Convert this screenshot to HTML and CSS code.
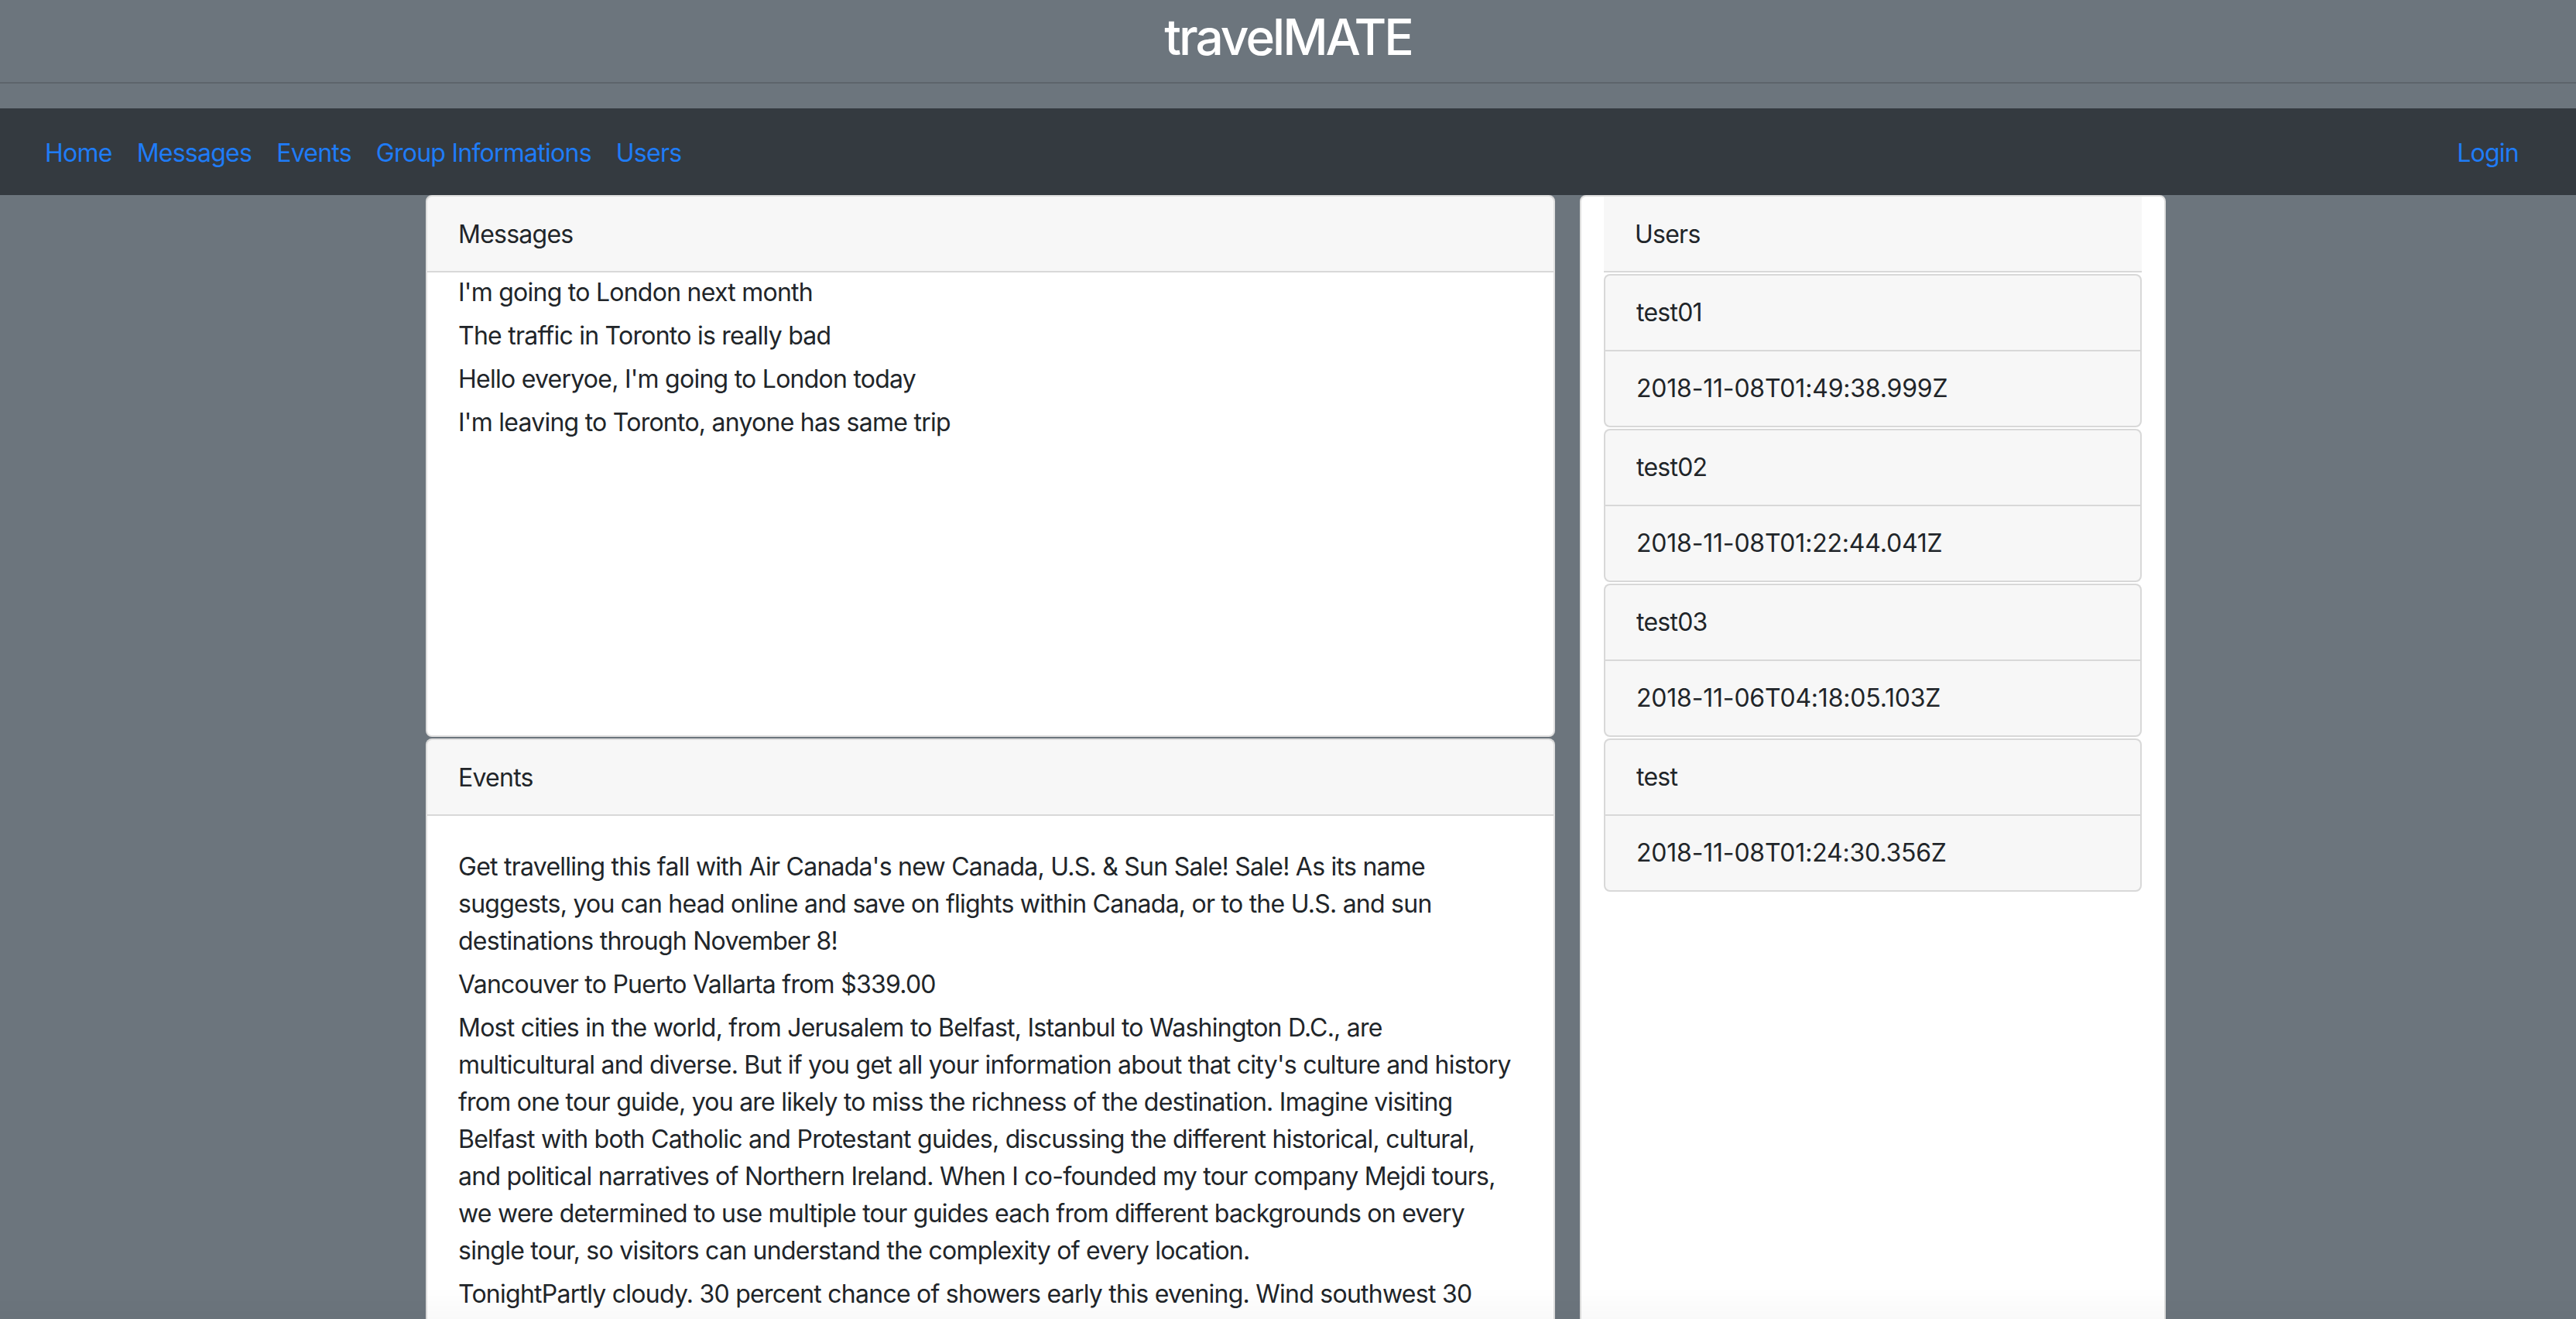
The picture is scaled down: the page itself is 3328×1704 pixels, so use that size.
FILE: index.html
```html
<!DOCTYPE html>
<html lang="en">
<head>
<meta charset="utf-8">
<title>travelMATE</title>
<link rel="stylesheet" href="styles.css">
</head>
<body>
<header class="site-header">
  <h2 class="site-title">travelMATE</h2>
</header>
<nav class="navbar">
  <div class="nav-left">
    <a class="nav-link" href="#">Home</a>
    <a class="nav-link" href="#">Messages</a>
    <a class="nav-link" href="#">Events</a>
    <a class="nav-link" href="#">Group Informations</a>
    <a class="nav-link" href="#">Users</a>
  </div>
  <div class="nav-right">
    <a class="nav-link" href="#">Login</a>
  </div>
</nav>
<main class="layout">
  <section class="left-col">
    <div class="card">
      <div class="card-header">Messages</div>
      <div class="messages-body">
        <p class="msg">I'm going to London next month</p>
        <p class="msg">The traffic in Toronto is really bad</p>
        <p class="msg">Hello everyoe, I'm going to London today</p>
        <p class="msg">I'm leaving to Toronto, anyone has same trip</p>
      </div>
    </div>
    <div class="card events-card">
      <div class="card-header">Events</div>
      <div class="events-body">
        <p>Get travelling this fall with Air Canada's new Canada, U.S. &amp; Sun Sale! Sale! As its name suggests, you can head online and save on flights within Canada, or to the U.S. and sun destinations through November 8!</p>
        <p>Vancouver to Puerto Vallarta from $339.00</p>
        <p>Most cities in the world, from Jerusalem to Belfast, Istanbul to Washington D.C., are multicultural and diverse. But if you get all your information about that city's culture and history from one tour guide, you are likely to miss the richness of the destination. Imagine visiting Belfast with both Catholic and Protestant guides, discussing the different historical, cultural, and political narratives of Northern Ireland. When I co-founded my tour company Mejdi tours, we were determined to use multiple tour guides each from different backgrounds on every single tour, so visitors can understand the complexity of every location.</p>
        <p>TonightPartly cloudy. 30 percent chance of showers early this evening. Wind southwest 30 km/h gusting to 50 becoming light this evening. Low plus 2.</p>
        <p>Air Transat has released its winter schedule with new routes to sun destinations from Toronto, Montreal and Vancouver.</p>
      </div>
    </div>
  </section>
  <aside class="users-card">
    <div class="users-header">Users</div>
    <div class="user">
      <div class="user-row">test01</div>
      <div class="user-row user-date">2018-11-08T01:49:38.999Z</div>
    </div>
    <div class="user">
      <div class="user-row">test02</div>
      <div class="user-row user-date">2018-11-08T01:22:44.041Z</div>
    </div>
    <div class="user">
      <div class="user-row">test03</div>
      <div class="user-row user-date">2018-11-06T04:18:05.103Z</div>
    </div>
    <div class="user">
      <div class="user-row">test</div>
      <div class="user-row user-date">2018-11-08T01:24:30.356Z</div>
    </div>
  </aside>
</main>
<div class="bottom-fade"></div>
</body>
</html>
```

FILE: styles.css
```css
html, body {
  margin: 0;
  padding: 0;
}

body {
  background: #6c757d;
  color: #212529;
  font-family: Inter, "Noto Sans", "Liberation Sans", sans-serif;
  font-size: 32px;
  line-height: 48px;
  letter-spacing: -0.75px;
}

.site-header {
  height: 106px;
  border-bottom: 2px solid #5d646b;
  text-align: center;
}

.site-title {
  margin: 0;
  padding-top: 10px;
  font-size: 64px;
  font-weight: 500;
  line-height: 76px;
  letter-spacing: -3px;
  color: #ffffff;
}

.navbar {
  margin-top: 32px;
  height: 112px;
  box-sizing: border-box;
  padding: 3px 40px 0;
  background: #343a40;
  display: flex;
  align-items: center;
  justify-content: space-between;
}

.nav-left,
.nav-right {
  display: flex;
}

.nav-link {
  color: #1f7cf7;
  text-decoration: none;
  padding: 0 16px;
}

.nav-left .nav-link:first-child {
  padding-left: 18px;
}

.nav-right .nav-link {
  padding-right: 34px;
}

.layout {
  display: grid;
  grid-template-columns: 1459px 757px;
  column-gap: 32px;
  margin-left: 550px;
  align-items: stretch;
}

.card {
  background: #ffffff;
  border: 2px solid rgba(0, 0, 0, 0.125);
  border-radius: 8px;
}

.card-header {
  padding: 25px 40px 23px;
  background: rgba(0, 0, 0, 0.03);
  border-bottom: 2px solid rgba(0, 0, 0, 0.125);
}

.messages-body {
  height: 598px;
  padding: 2px 40px 0;
  box-sizing: border-box;
}

.msg {
  margin: 0 0 8px;
}

.events-card {
  margin-top: 2px;
  border-bottom-left-radius: 0;
  border-bottom-right-radius: 0;
}

.events-body {
  padding: 42px 40px 0;
}

.events-body p {
  margin: 0 0 8px;
}

.users-card {
  background: #ffffff;
  border: 2px solid rgba(0, 0, 0, 0.125);
  border-radius: 8px 8px 0 0;
  padding: 0 29px;
}

.users-header {
  padding: 25px 40px 23px;
  background: #f7f7f7;
  border-bottom: 2px solid rgba(0, 0, 0, 0.125);
}

.user {
  margin-top: 2px;
  background: #f7f7f7;
  border: 2px solid rgba(0, 0, 0, 0.125);
  border-radius: 8px;
}

.user-row {
  padding: 24px 40px;
}

.user-date {
  letter-spacing: -0.2px;
}

.user-row + .user-row {
  border-top: 2px solid rgba(0, 0, 0, 0.125);
}

.bottom-fade {
  position: fixed;
  left: 0;
  right: 0;
  bottom: 0;
  height: 40px;
  background: linear-gradient(to bottom, rgba(0, 0, 0, 0), rgba(0, 0, 0, 0.025));
  pointer-events: none;
}
```
